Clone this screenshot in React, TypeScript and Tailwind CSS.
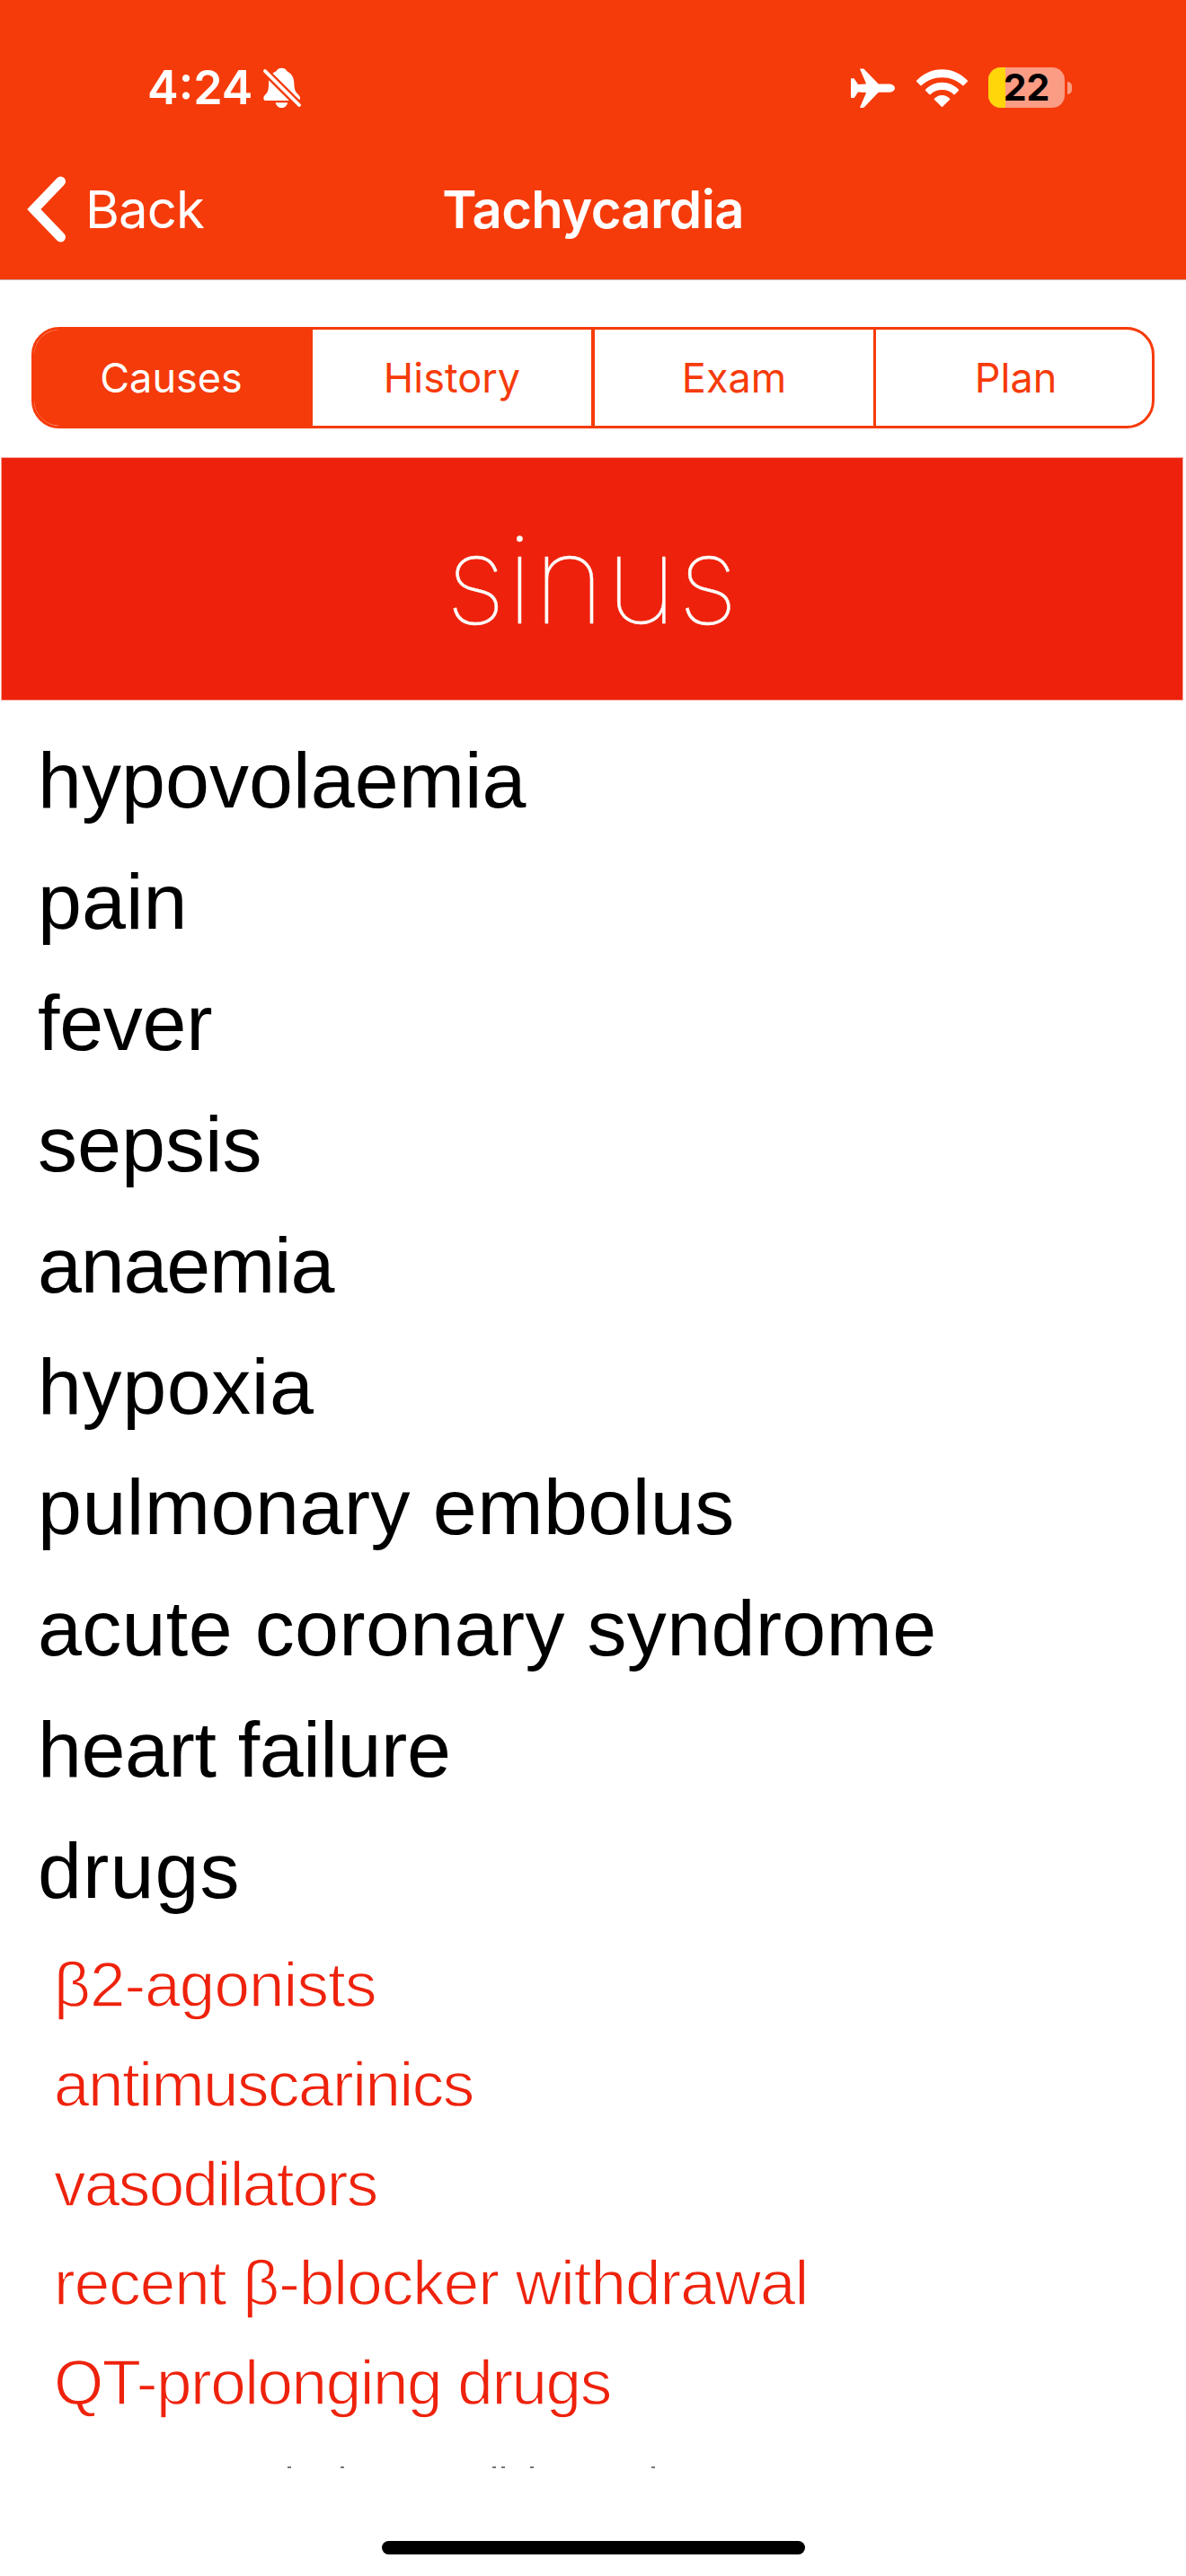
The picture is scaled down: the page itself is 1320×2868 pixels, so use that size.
import React from 'react';

const causes = [
  { label: 'hypovolaemia', tracking: 'tracking-[0.05px]' },
  { label: 'pain', tracking: 'tracking-[0px]' },
  { label: 'fever', tracking: 'tracking-[-0.3px]' },
  { label: 'sepsis', tracking: 'tracking-[0px]' },
  { label: 'anaemia', tracking: 'tracking-[-1.2px]' },
  { label: 'hypoxia', tracking: 'tracking-[0.6px]' },
  { label: 'pulmonary embolus', tracking: 'tracking-[0.45px]' },
  { label: 'acute coronary syndrome', tracking: 'tracking-[0.33px]' },
  { label: 'heart failure', tracking: 'tracking-[-0.4px]' },
  { label: 'drugs', tracking: 'tracking-[1.1px]' },
];

const drugs = [
  { label: 'β2-agonists', tracking: 'tracking-[-0.9px]' },
  { label: 'antimuscarinics', tracking: 'tracking-[-1.5px]' },
  { label: 'vasodilators', tracking: 'tracking-[-1.6px]' },
  { label: 'recent β-blocker withdrawal', tracking: 'tracking-[-0.97px]' },
  { label: 'QT-prolonging drugs', tracking: 'tracking-[-1.45px]' },
];

// Gaps before each letter tip of the row cut off by the scroll edge.
const tips = ['ml-[320px]', 'ml-[55px]', 'ml-[165px]', 'ml-[6px]', 'ml-[28px]', 'ml-[131px]'];

function BellSlash() {
  return (
    <svg className="h-[46px] w-[42px]" viewBox="0 0 42 46" fill="#fff">
      <path d="M20.5.7c3 0 5 1.500 6.200 3.900 4.400 2.200 7 6 7.500 11.400.4 6 .6 8.500 2 11 1.500 2.500 4.800 4.500 4.800 7 0 2-1.200 3-3 3H3.300c-2 0-3-1-3-2.600 0-3 3.200-4.400 4.500-7.400 1.200-3 1.200-6.500 1.300-11C6.300 10.500 9.500 6.500 14.200 4.600 15.500 2.200 17.500.7 20.500.7Z" />
      <path d="M13.700 39.200h13.400c-.7 3.500-3.300 5.800-6.700 5.800s-6-2.300-6.700-5.800Z" />
      <path d="M0 2.300 42 44" stroke="#f63b0a" strokeWidth="8.600" />
      <path d="M2 4.100 40 42" stroke="#fff" strokeWidth="3.800" strokeLinecap="round" />
    </svg>
  );
}

function Airplane() {
  return (
    <svg className="h-[44px] w-[50px]" viewBox="0 0 50 44" fill="#fff">
      <path d="M10.700.5h2.300c1.200 0 1.800.4 2.700 1.500L30 16.700c.6.700 1 .9 2 .9h10c4 0 7 2 7 4.600s-3 4.600-7 4.600H32c-1 0-1.400.2-2 .8L15.700 42.500c-.9 1-1.500 1.400-2.700 1.400h-2.300c-.5 0-.6-.4-.4-.9l6.400-14.700c.4-1 .2-1.300-.6-1.300L8 26.500l-3.600 5.400c-.6.9-1 1.200-1.900 1.200H.5c-.3 0-.5-.2-.5-.5V11.900c0-.4.2-.6.500-.6h2c.9 0 1.300.3 1.900 1.200L8 18l8.100-.5c.8 0 1-.3.6-1.300L10.300 1.500c-.2-.6-.1-1 .4-1Z" />
    </svg>
  );
}

function Wifi() {
  return (
    <svg className="h-[42px] w-[57px]" viewBox="0 0 57 42" fill="#fff">
      <path d="M.3 12.600C8 4.600 17.500.3 28.500.3S49 4.600 56.700 12.600c.5.500.5.900 0 1.400l-4 4c-.5.500-1 .5-1.500 0C45 12.200 37.200 9.200 28.500 9.200S12 12.200 5.800 18c-.5.500-1 .5-1.500 0l-4-4c-.5-.5-.5-.9 0-1.400Z" />
      <path d="M10.200 22.600c5-5 11-7.800 18.300-7.800s13.300 2.800 18.300 7.800c.5.500.5.900 0 1.400l-4 4c-.5.500-1 .5-1.500 0-3.600-3.300-7.700-5-12.800-5s-9.200 1.700-12.800 5c-.5.500-1 .5-1.500 0l-4-4c-.5-.5-.5-.9 0-1.400Z" />
      <path d="M20 32.700c2.200-2.400 5-3.800 8.500-3.800s6.300 1.400 8.500 3.800c.5.500.5.900 0 1.400l-7.600 7.500c-.6.600-1.200.6-1.800 0L20 34.100c-.5-.5-.5-.9 0-1.400Z" />
    </svg>
  );
}

function Battery() {
  return (
    <div className="flex items-center gap-[3px]">
      <div className="relative flex h-[45px] w-[85px] items-center justify-center rounded-[14px] bg-[#fb9c84]">
        <div className="absolute inset-y-0 left-0 w-[19px] rounded-l-[14px] bg-[#ffd60a]" />
        <span className="relative text-[41px] leading-[45px] font-bold text-black">22</span>
      </div>
      <div className="h-[14px] w-[5px] rounded-r-full bg-[#fb9c84]" />
    </div>
  );
}

function Header() {
  return (
    <header className="h-[312px] border-b border-[#c4b5b0] bg-[#f63b0a] pt-[71px] text-white">
      <div className="flex h-[53px] items-center justify-between pr-[127px] pl-[164px]">
        <div className="flex items-center gap-[12px]">
          <span className="text-[52px] leading-[53px] font-semibold">4:24</span>
          <BellSlash />
        </div>
        <div className="flex items-center">
          <Airplane />
          <div className="ml-[23px]">
            <Wifi />
          </div>
          <div className="ml-[23px]">
            <Battery />
          </div>
        </div>
      </div>
      <div className="mt-[63px] grid h-[92px] grid-cols-[1fr_auto_1fr] items-center text-[58px] leading-[92px]">
        <button className="flex items-center pl-[29px] tracking-[-0.9px]">
          <svg className="h-[76px] w-[46px]" viewBox="0 0 46 76" fill="none" stroke="#fff" strokeWidth="11" strokeLinecap="round">
            <path d="M38.500 7 8.800 38l29.700 31" />
          </svg>
          <span className="ml-[20px]">Back</span>
        </button>
        <h1 className="font-semibold tracking-[-0.65px]">Tachycardia</h1>
      </div>
    </header>
  );
}

function Segments() {
  return (
    <div className="mx-[35px] mt-[52px] flex h-[113px] overflow-hidden rounded-[31px] border-[3px] border-[#f63b0a] text-[45px] text-[#f63b0a]">
      <button className="flex w-[310px] items-center justify-center bg-[#f63b0a] pr-[5px] text-white">Causes</button>
      <button className="flex w-[314px] items-center justify-center border-r-4 border-[#f63b0a]">History</button>
      <button className="flex w-[313px] items-center justify-center border-r-[3px] border-[#f63b0a]">Exam</button>
      <button className="flex flex-1 items-center justify-center pl-[4px]">Plan</button>
    </div>
  );
}

export default function App() {
  return (
    <div className="flex h-[2868px] w-[1320px] flex-col overflow-hidden bg-white font-[Inter,sans-serif]">
      <Header />
      <Segments />
      <div className="mt-[32px] mr-[3px] ml-px flex h-[271px] items-center justify-center border border-[#f6a196] bg-[#ee220c]">
        <h2 className="text-[136px] leading-none font-thin tracking-[0.8px] text-white [-webkit-text-stroke:0.4px_white]">sinus</h2>
      </div>
      <ul className="pt-[22px] pl-[42px] font-['Liberation_Sans',sans-serif] text-[88px] leading-[134.9px] text-black">
        {causes.map((c) => (
          <li key={c.label} className={c.tracking}>{c.label}</li>
        ))}
      </ul>
      <ul className="pt-[4px] pl-[60px] font-['Liberation_Sans',sans-serif] text-[71px] leading-[110.8px] text-[#ee220c] [-webkit-text-stroke:1.3px_white]">
        {drugs.map((d) => (
          <li key={d.label} className={d.tracking}>{d.label}</li>
        ))}
      </ul>
      <div className="mt-[37px] flex h-[2px]">
        {tips.map((t) => (
          <span key={t} className={`${t} h-[2px] w-[4px] bg-[#777]`} />
        ))}
      </div>
      <div className="mx-auto mt-[81px] h-[15px] w-[471px] shrink-0 rounded-full bg-black" />
    </div>
  );
}
